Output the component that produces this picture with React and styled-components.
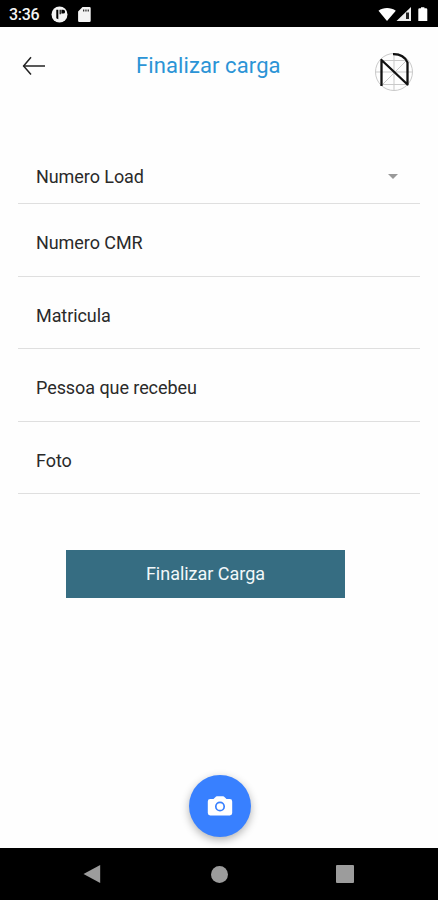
import { useState } from "react";
import styled, { createGlobalStyle } from "styled-components";

const fields = ["Numero CMR", "Matricula", "Pessoa que recebeu", "Foto"];

const App = () => {
	const [values, setValues] = useState({});

	const handleChange = (name, value) => {
		setValues({ ...values, [name]: value });
	};

	return (
		<Screen>
			<GlobalStyle />
			<StatusBar>
				<Clock>3:36</Clock>
				<svg width="17" height="17" viewBox="0 0 17 17">
					<circle cx="8.5" cy="8.5" r="8" fill="#f4f4f4" />
					<path d="M5.3 3.8h2v9.5a5 5 0 0 1-2-1z" fill="#000" />
					<path d="M8.6 3.8h1.2v4.4H8.6zM10.4 3.8h1.8a1.9 1.9 0 0 1 0 3.8h-1.8z" fill="#000" />
				</svg>
				<CardIcon width="13" height="15" viewBox="0 0 13 15">
					<path d="M4.5 0H11.5a1.2 1.2 0 0 1 1.2 1.2V13.8a1.2 1.2 0 0 1-1.2 1.2H1.3A1.2 1.2 0 0 1 .1 13.8V4.6z" fill="#f4f4f4" />
					<path d="M5 2.6h1.3v2H5zM7.3 2.6h1.3v2H7.3zM9.6 2.6h1.3v2H9.6z" fill="#333" />
				</CardIcon>
				<Signals width="52" height="17" viewBox="0 0 52 17">
					<path d="M.5 4.8C5 1 13 1 17.8 4.8L9 15z" fill="#fff" />
					<path d="M33 1v14H18.5z" fill="#eee" />
					<path d="M28 6.5h3V13h-3z" fill="#222" />
					<path d="M43 1.2h3.4V2.2h1.6a1.3 1.3 0 0 1 1.3 1.3V15H40.3V3.5a1.3 1.3 0 0 1 1.3-1.3H43z" fill="#fff" />
				</Signals>
			</StatusBar>

			<Header>
				<BackButton aria-label="Voltar">
					<svg width="24" height="20" viewBox="0 0 24 20" fill="none" stroke="#222" strokeWidth="1.5">
						<path d="M1.5 10H23" />
						<path d="M9 1.2L1.6 10L9 18.5" />
					</svg>
				</BackButton>
				<Title>Finalizar carga</Title>
				<Logo width="40" height="40" viewBox="0 0 40 40" fill="none">
					<g stroke="#c9c9c9" strokeWidth="1">
						<circle cx="20" cy="20" r="18.5" />
						<path d="M20 1.5v37M1.5 20h37M8 8.5h25M8 32.5h25M8 33L33 8M8 8L33 33" />
					</g>
					<path d="M7.5 34V8L33.5 32.5V10.5C31 5 25.5 2 19 2.2" stroke="#111" strokeWidth="2.3" strokeLinejoin="round" />
				</Logo>
			</Header>

			<Form onSubmit={(e) => e.preventDefault()}>
				<SelectRow type="button">
					Numero Load
					<Caret />
				</SelectRow>
				{fields.map((name) => (
					<Field
						key={name}
						placeholder={name}
						value={values[name] || ""}
						onChange={(e) => handleChange(name, e.target.value)}
					/>
				))}
				<SubmitButton type="submit">Finalizar Carga</SubmitButton>
			</Form>

			<Footer>
				<CameraButton aria-label="Foto">
					<svg width="26" height="22" viewBox="0 0 26 22">
						<path d="M3.2 4H6.5L8.3 2.3Q9 1.3 10 1.3H16Q17 1.3 17.7 2.3L19.5 4H22.8Q25.2 4 25.2 6.4V18Q25.2 20.4 22.8 20.4H3.2Q.8 20.4 .8 18V6.4Q.8 4 3.2 4z" fill="#fff" />
						<circle cx="13" cy="11.5" r="4.2" fill="none" stroke="#3880ff" strokeWidth="1.7" />
					</svg>
				</CameraButton>
			</Footer>

			<NavBar>
				<svg width="18" height="20" viewBox="0 0 18 20">
					<path d="M.5 10L17.2 1v18z" fill="#9c9c9c" />
				</svg>
				<HomeDot />
				<RecentSquare />
			</NavBar>
		</Screen>
	);
};

export default App;

const GlobalStyle = createGlobalStyle`
	* {
		box-sizing: border-box;
	}
	body {
		margin: 0;
		font-family: Roboto, "Liberation Sans", sans-serif;
	}
	button, input {
		font-family: inherit;
		border: none;
		border-radius: 0;
		outline: none;
		padding: 0;
	}
	svg {
		display: block;
		flex: none;
	}
`;

const Screen = styled.div`
	display: flex;
	flex-direction: column;
	width: 438px;
	height: 900px;
	overflow: hidden;
	background-color: #fefefe;
`;

const StatusBar = styled.div`
	display: flex;
	align-items: center;
	height: 27px;
	padding: 1px 8px 0 9px;
	background-color: #000000;
`;

const Clock = styled.span`
	width: 42px;
	color: #f4f4f4;
	font-size: 16px;
	font-weight: 500;
	letter-spacing: -0.3px;
`;

const CardIcon = styled.svg`
	margin-left: 10px;
`;

const Signals = styled.svg`
	margin-left: auto;
`;

const Header = styled.header`
	display: flex;
	height: 123px;
	padding: 24px 24px 0 22px;
`;

const BackButton = styled.button`
	width: 114px;
	height: 30px;
	background: none;
`;

const Title = styled.h1`
	margin: 0;
	color: #2b94d6;
	font-size: 22px;
	font-weight: 400;
	line-height: 30px;
	letter-spacing: 0.1px;
	white-space: nowrap;
`;

const Logo = styled.svg`
	margin: 1px 0 0 auto;
`;

const Form = styled.form`
	display: flex;
	flex-direction: column;
	padding: 0 18px;
`;

const SelectRow = styled.button`
	display: flex;
	justify-content: space-between;
	align-items: center;
	height: 54px;
	padding: 0 22px 0 18px;
	border-bottom: 1px solid #dfdfdf;
	background: none;
	color: #2a2a2a;
	font-size: 18px;
	letter-spacing: -0.07px;
`;

const Caret = styled.span`
	border-left: 5px solid transparent;
	border-right: 5px solid transparent;
	border-top: 5px solid #999999;
`;

const Field = styled.input`
	height: 72.5px;
	padding: 6px 18px 0;
	border-bottom: 1px solid #dfdfdf;
	background: none;
	color: #2a2a2a;
	font-size: 18px;
	letter-spacing: -0.07px;

	&::placeholder {
		color: #2a2a2a;
		opacity: 1;
	}
`;

const SubmitButton = styled.button`
	width: 279px;
	height: 48px;
	margin: 56px 0 0 48px;
	padding-bottom: 2px;
	background-color: #366d82;
	color: #f2f8fa;
	font-size: 18px;
	letter-spacing: -0.02px;
`;

const Footer = styled.div`
	display: flex;
	justify-content: center;
	margin-top: auto;
	padding: 0 0 11.5px;
`;

const CameraButton = styled.button`
	display: flex;
	justify-content: center;
	align-items: center;
	width: 62px;
	height: 62px;
	margin-left: 1px;
	border-radius: 50%;
	background-color: #3880ff;
	box-shadow: 0 3px 8px rgba(0, 0, 0, 0.3);
`;

const NavBar = styled.nav`
	display: flex;
	flex: none;
	justify-content: space-between;
	align-items: center;
	height: 52px;
	padding: 0 84px 0 83px;
	background-color: #000000;
`;

const HomeDot = styled.span`
	width: 17px;
	height: 17px;
	margin-left: 1px;
	border-radius: 50%;
	background-color: #9c9c9c;
`;

const RecentSquare = styled.span`
	width: 18px;
	height: 18px;
	border-radius: 1px;
	background-color: #9c9c9c;
`;
